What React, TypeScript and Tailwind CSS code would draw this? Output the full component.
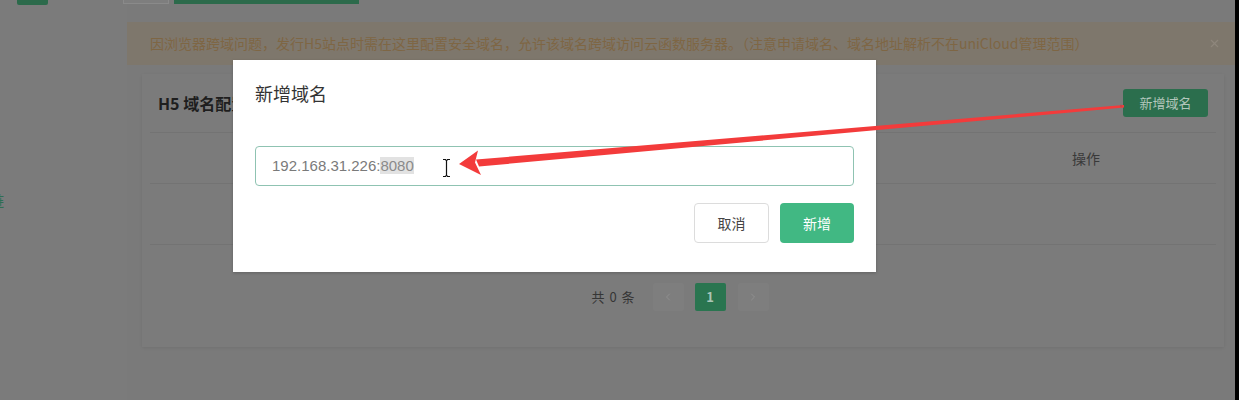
import { X, ChevronLeft, ChevronRight } from "lucide-react";

const cjk = "font-['Noto_Sans_CJK_SC','Noto_Sans',sans-serif]";

const Arrow = () => (
  <svg className="pointer-events-none absolute left-0 top-0" width="1239" height="400">
    <polygon points="1124,105 1124,107.5 479,166.5 476,159.5" fill="#f33b3b" />
    <polygon points="459,164 478,150.5 475,162.5 481,175" fill="#f33b3b" />
    <circle cx="1121" cy="106" r="1.2" fill="#c44" />
  </svg>
);

const Cursor = () => (
  <svg className="absolute left-[441px] top-[158px]" width="11" height="20" viewBox="0 0 11 20">
    <path d="M2 1.5h2.5L5.5 3l1-1.5H9M5.5 3v14M2 18.5h2.5L5.5 17l1 1.5H9" fill="none" stroke="#111" strokeWidth="1.2" />
  </svg>
);

const Modal = () => (
  <div className="absolute left-[233px] top-[60px] flex h-[212px] w-[643px] flex-col bg-white px-[22px] pt-[20px] shadow-[0_1px_3px_rgba(0,0,0,0.2)]">
    <div className={`${cjk} h-[26px] text-[18px] leading-[26px] text-[#333]`}>新增域名</div>
    <div className="mt-[40px] flex h-[40px] items-center rounded-[4px] border border-[#8fc3b2] px-[16px]">
      <span className="font-['Liberation_Sans',sans-serif] text-[15px] text-[#7a7a7a]">
        192.168.31.226:<span className="bg-[#e2e2e2] text-[#8a8a8a]">8080</span>
      </span>
    </div>
    <div className="mt-[17px] flex justify-end gap-[11px]">
      <button className={`${cjk} h-[40px] w-[75px] rounded-[4px] border border-[#dcdcdc] bg-white text-[14px] text-[#444]`}>
        取消
      </button>
      <button className={`${cjk} h-[40px] w-[74px] rounded-[4px] bg-[#41b883] text-[14px] text-white`}>
        新增
      </button>
    </div>
  </div>
);

export default function App() {
  return (
    <div className={`relative flex h-[400px] w-[1239px] overflow-hidden bg-[#767474] ${cjk}`}>
      <div className="flex w-[127px] shrink-0 flex-col bg-[#7b7b7b]">
        <div className="ml-[17px] h-[5px] w-[31px] rounded-b-[2px] bg-[#2c6a4b]" />
        <div className="mt-[188px] -ml-[10px] text-[14px] leading-[14px] text-[#2f6e53]">链</div>
      </div>

      <div className="flex w-[1108px] flex-col">
        <div className="flex h-[22px] bg-[#7a7a7a]">
          <div className="-ml-[4px] h-[4px] w-[46px] border border-t-0 border-[#8a8a8a] bg-[#7e7e7e]" />
          <div className="ml-[5px] h-[4px] w-[185px] bg-[#2c6a4b]" />
        </div>
        <div className="flex h-[43px] items-center justify-between bg-[#7e776c] pl-[23px] pr-[14px]">
          <span className="text-[14px] text-[#7e6644]">
            因浏览器跨域问题，发行H5站点时需在这里配置安全域名，允许该域名跨域访问云函数服务器。（注意申请域名、域名地址解析不在uniCloud管理范围）
          </span>
          <X size={13} className="text-[#8f877c]" />
        </div>

        <div className="flex flex-1 bg-[#7a7a7a] pt-[9px]">
          <div className="ml-[15px] flex h-[273px] w-[1082px] flex-col bg-[#7b7b7b] px-[8px] shadow-[0_1px_3px_rgba(0,0,0,0.08)]">
            <div className="flex h-[59px] items-center justify-between border-b border-[#737373] pl-[8px] pr-[8px]">
              <span className="text-[16px] font-bold text-[#1e1e1e]">H5 域名配置</span>
              <button className="h-[28px] w-[85px] rounded-[3px] bg-[#2b6e4d] text-[13px] text-[#b3c7bc]">新增域名</button>
            </div>
            <div className="flex h-[51px] items-center justify-end border-b border-[#737373] pr-[116px]">
              <span className="text-[14px] text-[#393939]">操作</span>
            </div>
            <div className="h-[61px] border-b border-[#737373]" />
            <div className="mt-[38px] flex items-center justify-center pr-[6px]">
              <span className="mr-[17px] text-[13px] tracking-[1px] text-[#363636]">共 0 条</span>
              <div className="flex h-[28px] w-[31px] items-center justify-center rounded-[2px] bg-[#7e7e7e]">
                <ChevronLeft size={12} className="text-[#8f8f8f]" />
              </div>
              <div className="ml-[11px] flex h-[28px] w-[31px] items-center justify-center rounded-[2px] bg-[#2a7550] text-[13px] font-bold text-[#aac5b7]">
                1
              </div>
              <div className="ml-[12px] flex h-[28px] w-[31px] items-center justify-center rounded-[2px] bg-[#7e7e7e]">
                <ChevronRight size={12} className="text-[#8f8f8f]" />
              </div>
            </div>
          </div>
        </div>
      </div>

      <div className="w-[4px] shrink-0 bg-black" />

      <Modal />
      <Cursor />
      <Arrow />
    </div>
  );
}
